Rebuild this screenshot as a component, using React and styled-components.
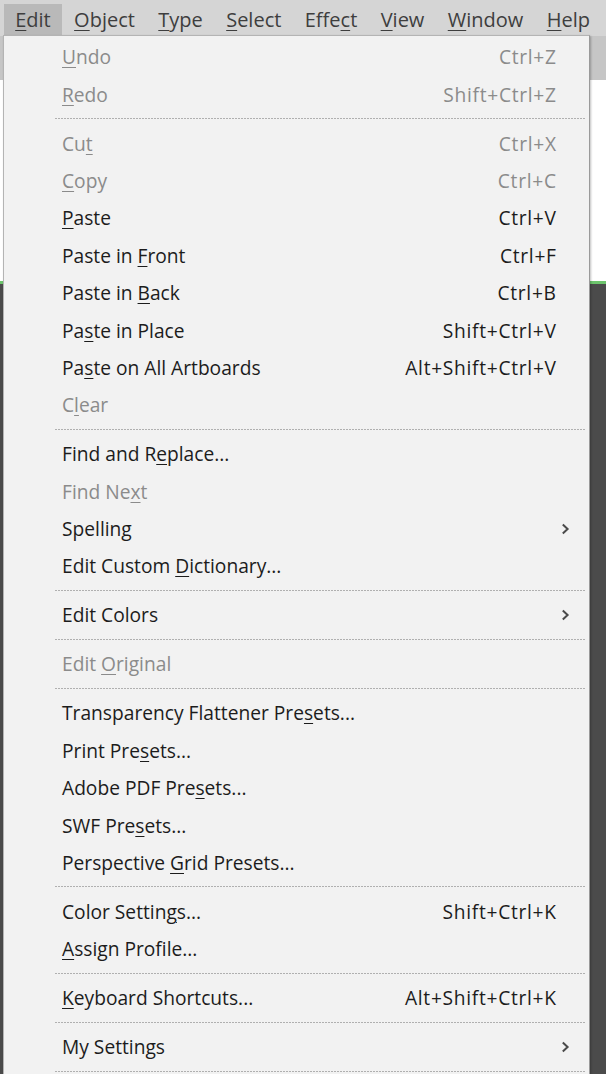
import React from "react";
import styled, { createGlobalStyle } from "styled-components";

const GlobalStyle = createGlobalStyle`
  html, body {
    margin: 0;
    padding: 0;
    overflow: hidden;
    font-family: "Open Sans", "Noto Sans", sans-serif;
  }
`;

const Page = styled.div`
  position: relative;
  width: 606px;
  height: 1074px;
  overflow: hidden;
  display: flex;
  flex-direction: column;
  background: #4b4b4b;
`;

const MenuBar = styled.div`
  height: 36px;
  flex-shrink: 0;
  display: flex;
  align-items: stretch;
  padding: 4px 0 0 3.5px;
  box-sizing: border-box;
  background: #d5d5d5;
`;

const BarItem = styled.div`
  display: flex;
  align-items: center;
  padding: 0 11.7px 2px 11.7px;
  font-size: 20px;
  color: #3e3e3e;
  background: ${(p) => (p.active ? "#b9b9b9" : "transparent")};
`;

const ToolStrip = styled.div`
  height: 44px;
  flex-shrink: 0;
  background: #c6c6c6;
`;

const Canvas = styled.div`
  height: 201px;
  flex-shrink: 0;
  background: #ffffff;
  border-bottom: 3px solid #6dc56d;
`;

const Workspace = styled.div`
  flex: 1;
  background: #4b4b4b;
`;

// THE DROPDOWN LIES OVER THE PAGE, SO IT IS THE ONLY ABSOLUTE PART
const Dropdown = styled.div`
  position: absolute;
  left: 3px;
  top: 35px;
  width: 587px;
  box-sizing: border-box;
  padding: 2px 0 20px 0;
  background: #f2f2f2;
  border: 1px solid #b4b4b4;
  border-right-color: #9a9a9a;
  box-shadow: 1px 1px 2px rgba(0, 0, 0, 0.25);
`;

const Row = styled.div`
  height: 37.4px;
  display: flex;
  align-items: center;
  padding: 0 33px 0 58px;
  font-size: 19.2px;
  color: ${(p) => (p.disabled ? "#8b8b8b" : "#1c1c1c")};
`;

const Label = styled.span`
  flex: 1;
  white-space: nowrap;
`;

const Shortcut = styled.span`
  white-space: nowrap;
  letter-spacing: 0.7px;
  margin-right: -0.7px;
`;

const Mnemonic = styled.span`
  text-decoration: underline;
  text-underline-offset: 3px;
  text-decoration-thickness: 1px;
`;

const Arrow = styled.svg`
  width: 9px;
  height: 12px;
  margin-right: -14px;
`;

const Separator = styled.div`
  height: 11.6px;
  display: flex;
  align-items: center;
  padding: 0 4px 0 51px;
  &::after {
    content: "";
    flex: 1;
    height: 1px;
    background: repeating-linear-gradient(to right, #b0b0b0 0 2px, transparent 2px 3px);
  }
`;

const bar = [
  ["Edit", 0],
  ["Object", 0],
  ["Type", 0],
  ["Select", 0],
  ["Effect", 4],
  ["View", 0],
  ["Window", 0],
  ["Help", 0],
];

const sections = [
  [
    { label: "Undo", mn: 0, key: "Ctrl+Z", off: true },
    { label: "Redo", mn: 0, key: "Shift+Ctrl+Z", off: true },
  ],
  [
    { label: "Cut", mn: 2, key: "Ctrl+X", off: true },
    { label: "Copy", mn: 0, key: "Ctrl+C", off: true },
    { label: "Paste", mn: 0, key: "Ctrl+V" },
    { label: "Paste in Front", mn: 9, key: "Ctrl+F" },
    { label: "Paste in Back", mn: 9, key: "Ctrl+B" },
    { label: "Paste in Place", mn: 2, key: "Shift+Ctrl+V" },
    { label: "Paste on All Artboards", mn: 2, key: "Alt+Shift+Ctrl+V" },
    { label: "Clear", mn: 1, off: true },
  ],
  [
    { label: "Find and Replace...", mn: 10 },
    { label: "Find Next", mn: 7, off: true },
    { label: "Spelling", sub: true },
    { label: "Edit Custom Dictionary...", mn: 12 },
  ],
  [{ label: "Edit Colors", sub: true }],
  [{ label: "Edit Original", mn: 5, off: true }],
  [
    { label: "Transparency Flattener Presets...", mn: 26 },
    { label: "Print Presets...", mn: 9 },
    { label: "Adobe PDF Presets...", mn: 13 },
    { label: "SWF Presets...", mn: 7 },
    { label: "Perspective Grid Presets...", mn: 12 },
  ],
  [
    { label: "Color Settings...", mn: 12, key: "Shift+Ctrl+K" },
    { label: "Assign Profile...", mn: 0 },
  ],
  [{ label: "Keyboard Shortcuts...", mn: 0, key: "Alt+Shift+Ctrl+K" }],
  [{ label: "My Settings", sub: true }],
];

const withMnemonic = (text, i) => {
  if (i === undefined) return text;
  return (
    <>
      {text.slice(0, i)}
      <Mnemonic>{text[i]}</Mnemonic>
      {text.slice(i + 1)}
    </>
  );
};

const SubArrow = () => (
  <Arrow viewBox="0 0 9 12">
    <path d="M1.8 1.6 L6.6 6 L1.8 10.4" fill="none" stroke="#4a4a4a" strokeWidth="2" />
  </Arrow>
);

const App = () => {
  return (
    <Page>
      <GlobalStyle />
      <MenuBar>
        {bar.map(([name, mn], i) => (
          <BarItem key={name} active={i === 0}>
            {withMnemonic(name, mn)}
          </BarItem>
        ))}
      </MenuBar>
      <ToolStrip />
      <Canvas />
      <Workspace />

      <Dropdown>
        {sections.map((items, s) => (
          <React.Fragment key={s}>
            {s > 0 && <Separator />}
            {items.map((it) => (
              <Row key={it.label} disabled={it.off}>
                <Label>{withMnemonic(it.label, it.mn)}</Label>
                {it.key && <Shortcut>{it.key}</Shortcut>}
                {it.sub && <SubArrow />}
              </Row>
            ))}
          </React.Fragment>
        ))}
        <Separator />
      </Dropdown>
    </Page>
  );
};

export default App;
